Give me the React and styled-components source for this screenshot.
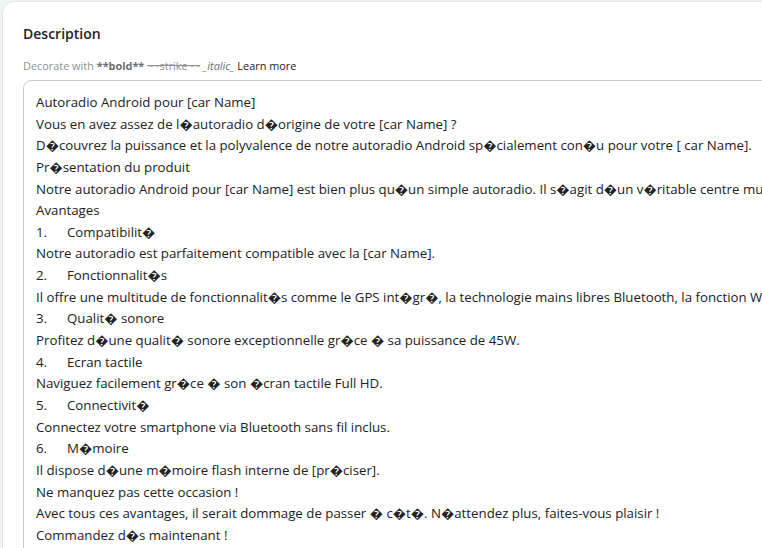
import React from "react";
import styled, { createGlobalStyle } from "styled-components";

const Global = createGlobalStyle`
  html, body { margin: 0; padding: 0; background: #f1f2f3; overflow: hidden; }
  body { font-family: "Open Sans", "Noto Sans", sans-serif; }
  #root { width: 762px; height: 548px; overflow: hidden; }
`;

const Page = styled.div`
  padding: 1px 0 0 2px;
`;

const Card = styled.section`
  width: 1200px;
  background: #ffffff;
  border: 1px solid #e1e3e5;
  border-radius: 12px;
  padding: 21px 20px 20px 20px;
  box-sizing: border-box;
`;

const Title = styled.h2`
  margin: 0;
  font-size: 14px;
  font-weight: 600;
  line-height: 22px;
  color: #202223;
`;

const Help = styled.p`
  margin: 13px 0 0 0;
  font-size: 10.9px;
  line-height: 16px;
  color: #8c9196;
`;

const Strong = styled.b`
  color: #6d7175;
  font-weight: 700;
`;

const Strike = styled.s`
  color: #8c9196;
`;

const Em = styled.i`
  color: #6d7175;
`;

const Link = styled.span`
  color: #202223;
`;

const Field = styled.div`
  margin-top: 6px;
  border: 1px solid #c9cccf;
  border-radius: 8px;
  padding: 11px 12px 10px 12px;
  min-height: 600px;
  font-size: 13.27px;
  line-height: 21.65px;
  color: #202223;
  white-space: pre;
`;

const Line = styled.div`
  height: 21.65px;
`;

const Num = styled.span`
  display: inline-block;
  width: 31px;
`;

const lines = [
  "Autoradio Android pour [car Name]",
  "Vous en avez assez de l\uFFFDautoradio d\uFFFDorigine de votre [car Name] ?",
  "D\uFFFDcouvrez la puissance et la polyvalence de notre autoradio Android sp\uFFFDcialement con\uFFFDu pour votre [ car Name].",
  "Pr\uFFFDsentation du produit",
  "Notre autoradio Android pour [car Name] est bien plus qu\uFFFDun simple autoradio. Il s\uFFFDagit d\uFFFDun v\uFFFDritable centre multim\uFFFDdia complet.",
  "Avantages",
  ["1.", "Compatibilit\uFFFD"],
  "Notre autoradio est parfaitement compatible avec la [car Name].",
  ["2.", "Fonctionnalit\uFFFDs"],
  "Il offre une multitude de fonctionnalit\uFFFDs comme le GPS int\uFFFDgr\uFFFD, la technologie mains libres Bluetooth, la fonction Wi-Fi et bien plus encore.",
  ["3.", "Qualit\uFFFD sonore"],
  "Profitez d\uFFFDune qualit\uFFFD sonore exceptionnelle gr\uFFFDce \uFFFD sa puissance de 45W.",
  ["4.", "Ecran tactile"],
  "Naviguez facilement gr\uFFFDce \uFFFD son \uFFFDcran tactile Full HD.",
  ["5.", "Connectivit\uFFFD"],
  "Connectez votre smartphone via Bluetooth sans fil inclus.",
  ["6.", "M\uFFFDmoire"],
  "Il dispose d\uFFFDune m\uFFFDmoire flash interne de [pr\uFFFDciser].",
  "Ne manquez pas cette occasion !",
  "Avec tous ces avantages, il serait dommage de passer \uFFFD c\uFFFDt\uFFFD. N\uFFFDattendez plus, faites-vous plaisir !",
  "Commandez d\uFFFDs maintenant !",
];

export default function App() {
  return (
    <Page>
      <Global />
      <Card>
        <Title>Description</Title>
        <Help>
          Decorate with <Strong>**bold**</Strong> <Strike>~~strike~~</Strike>{" "}
          <Em>_italic_</Em> <Link>Learn more</Link>
        </Help>
        <Field>
          {lines.map((l, i) =>
            Array.isArray(l) ? (
              <Line key={i}>
                <Num>{l[0]}</Num>
                {l[1]}
              </Line>
            ) : (
              <Line key={i}>{l}</Line>
            )
          )}
        </Field>
      </Card>
    </Page>
  );
}
